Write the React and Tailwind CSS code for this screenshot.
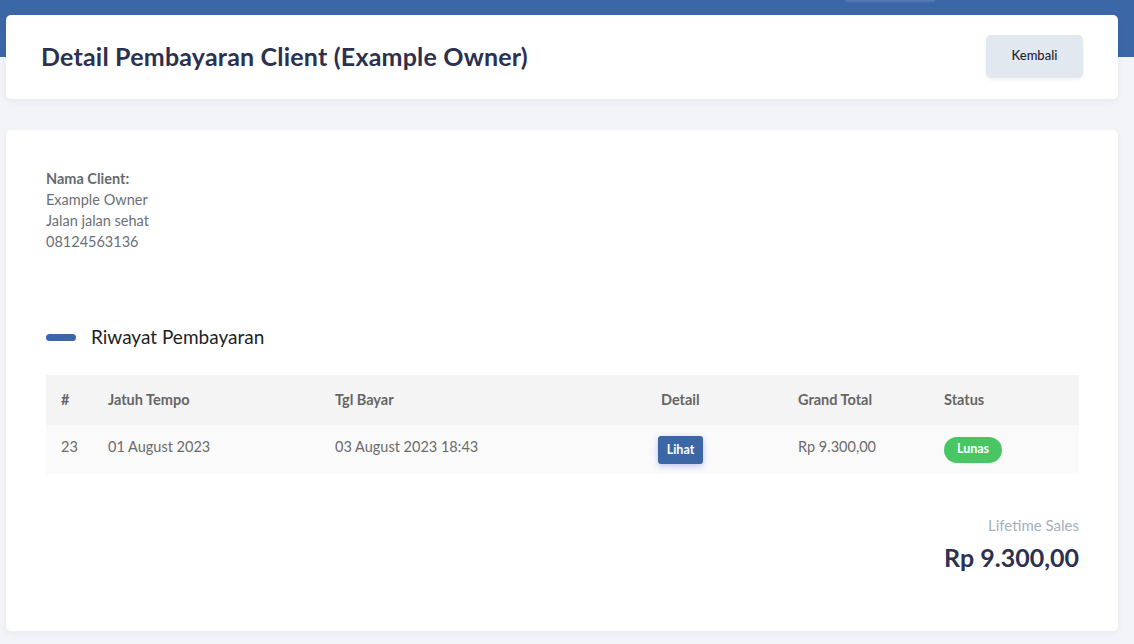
export default function App() {
  return (
    <div className="min-h-[644px] w-full bg-[#f3f4f8] pb-[13px] font-['Lato','Noto_Sans',sans-serif]">
      <div className="relative h-[57px] bg-[#3b67a7]">
        <div className="absolute left-[845px] top-0 h-[3px] w-[90px] rounded-b bg-gradient-to-b from-[#5a7fb6] to-[#3b67a7]" />
      </div>
      <div className="-mt-[42px] px-[6px] pr-[16px]">
        <div className="relative flex h-[84px] items-center justify-between rounded-[5px] bg-white pl-[35px] pr-[35px] shadow-[0_2px_6px_rgba(30,40,80,0.06)]">
          <h1 className="text-[25px] font-bold tracking-[0.2px] text-[#2c3150]">Detail Pembayaran Client (Example Owner)</h1>
          <button className="mt-[-2px] h-[43px] w-[97px] rounded-[5px] bg-[#e2e8f0] text-[13px] font-medium text-[#1f2230] shadow-[0_2px_4px_rgba(0,0,0,0.06)]">Kembali</button>
        </div>
        <div className="mt-[31px] rounded-[5px] bg-white pl-[40px] pr-[39px] pb-[54px] pt-[38px] shadow-[0_2px_6px_rgba(30,40,80,0.05)]">
          <div className="text-[14.5px] leading-[21px] text-[#6b6f76]">
            <div className="font-bold text-[#666a70]">Nama Client:</div>
            <div>Example Owner</div>
            <div>Jalan jalan sehat</div>
            <div>08124563136</div>
          </div>
          <div className="mt-[71px] flex items-center">
            <div className="h-[7px] w-[30px] rounded-full bg-[#3b67a7]" />
            <div className="ml-[15px] text-[19px] text-[#1d1f24]">Riwayat Pembayaran</div>
          </div>
          <table className="mt-[23px] w-full table-fixed border-collapse text-[14.5px]">
            <colgroup>
              <col className="w-[47px]" />
              <col className="w-[227px]" />
              <col className="w-[326px]" />
              <col className="w-[137px]" />
              <col className="w-[146px]" />
              <col />
            </colgroup>
            <thead>
              <tr className="h-[50px] bg-[#f4f4f4] text-left font-bold text-[#666666]">
                <th className="pl-[15px] font-bold">#</th>
                <th className="pl-[15px] font-bold">Jatuh Tempo</th>
                <th className="pl-[15px] font-bold">Tgl Bayar</th>
                <th className="pl-[15px] font-bold">Detail</th>
                <th className="pl-[15px] font-bold">Grand Total</th>
                <th className="pl-[15px] font-bold">Status</th>
              </tr>
            </thead>
            <tbody>
              <tr className="h-[49px] bg-[#fafafa] text-[#6b6b6b]">
                <td className="pl-[15px] pb-[5px]">23</td>
                <td className="pl-[15px] pb-[5px]">01 August 2023</td>
                <td className="pl-[15px] pb-[5px]">03 August 2023 18:43</td>
                <td className="pl-[12px] pt-[2px]">
                  <button className="h-[28px] w-[45px] rounded-[3px] bg-[#3b67a7] text-[12.5px] font-bold text-white shadow-[0_2px_6px_rgba(80,90,230,0.35)]">Lihat</button>
                </td>
                <td className="pl-[15px] pb-[5px]">Rp 9.300,00</td>
                <td className="pl-[15px] pt-[1px]">
                  <span className="inline-flex h-[26px] w-[58px] items-center justify-center rounded-full bg-[#48c664] text-[12.5px] font-bold text-white">Lunas</span>
                </td>
              </tr>
            </tbody>
          </table>
          <div className="mt-[40px] text-right">
            <div className="text-[15px] text-[#a3afbf]">Lifetime Sales</div>
            <div className="mt-[3px] text-[25px] font-bold text-[#2c3150]">Rp 9.300,00</div>
          </div>
        </div>
      </div>
    </div>
  );
}
